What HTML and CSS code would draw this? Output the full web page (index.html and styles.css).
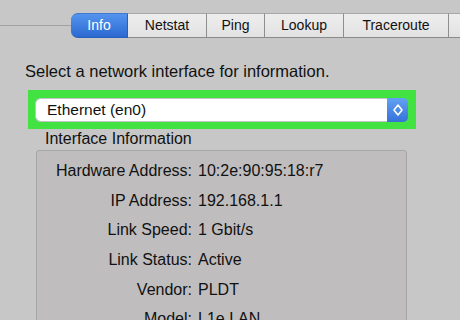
FILE: index.html
```html
<!DOCTYPE html>
<html lang="en">
<head>
    <meta charset="UTF-8">
    <meta name="viewport" content="width=device-width, initial-scale=1.0">
    <title>Network Utility</title>
    <link rel="stylesheet" href="styles.css">
</head>
<body>

<div class="tabs">
    <div class="tab-rule"></div>
    <div class="tab tab-active" style="width: 57px;">Info</div>
    <div class="tab" style="width: 79px;">Netstat</div>
    <div class="tab" style="width: 58px;">Ping</div>
    <div class="tab" style="width: 79px;">Lookup</div>
    <div class="tab" style="width: 105px;">Traceroute</div>
    <div class="tab" style="width: 20px;"></div>
</div>

<p class="prompt">Select a network interface for information.</p>

<div class="highlight">
    <div class="select-field">
        <div class="select-value">Ethernet (en0)</div>
        <div class="stepper">
            <svg width="12" height="14" viewBox="0 0 12 14">
                <path d="M6 2 L10 7 L6 12 L2 7 Z" fill="none" stroke="white" stroke-width="1.6" stroke-linejoin="round"/>
            </svg>
        </div>
    </div>
</div>

<div class="group-title">Interface Information</div>
<div class="group-box">
    <div class="info-grid">
        <div class="info-label">Hardware Address:</div><div>10:2e:90:95:18:r7</div>
        <div class="info-label">IP Address:</div><div>192.168.1.1</div>
        <div class="info-label">Link Speed:</div><div>1 Gbit/s</div>
        <div class="info-label">Link Status:</div><div>Active</div>
        <div class="info-label">Vendor:</div><div>PLDT</div>
        <div class="info-label">Model:</div><div>L1e LAN</div>
    </div>
</div>

</body>
</html>
```

FILE: styles.css
```css
body {
    font-family: 'Liberation Sans', Arial, sans-serif;
    background-color: #c7c7c7;
    margin: 0;
    padding: 0;
    color: #111;
    overflow: hidden;
}

.tabs {
    display: flex;
    align-items: stretch;
    margin-top: 13px;
    height: 25px;
    white-space: nowrap;
}

.tab-rule {
    flex: 0 0 71px;
    height: 1px;
    margin-top: 12px;
    background-color: #a2a2a2;
}

.tab {
    flex: 0 0 auto;
    box-sizing: border-box;
    height: 25px;
    line-height: 23px;
    text-align: center;
    font-size: 14px;
    color: #111;
    background: linear-gradient(#eeeeee, #e2e2e2);
    border-top: 1px solid #a8a8a8;
    border-bottom: 1px solid #8a8a8a;
    border-right: 1px solid #8e8e8e;
}

.tab-active {
    color: white;
    background: linear-gradient(#5494ee, #2b69d2);
    border-top-color: #3f78cf;
    border-bottom-color: #2a5fb8;
    border-right-color: #2a5fb8;
    border-radius: 7px 0 0 7px;
}

.prompt {
    margin: 24px 0 0 25px;
    font-size: 16.5px;
    line-height: 18px;
}

.highlight {
    margin: 10px 0 0 28px;
    width: 388px;
    box-sizing: border-box;
    padding: 8px 8px 7px 7px;
    background-color: #42e242;
}

.select-field {
    display: flex;
    height: 24px;
}

.select-value {
    flex: 1;
    box-sizing: border-box;
    background-color: white;
    border: 1px solid #c4c4c4;
    border-right: none;
    border-radius: 6px 0 0 6px;
    padding-left: 11px;
    font-size: 15.5px;
    line-height: 22px;
}

.stepper {
    flex: 0 0 21px;
    display: flex;
    align-items: center;
    justify-content: center;
    background: linear-gradient(#63a2f2, #3472da);
    border-radius: 0 5px 5px 0;
}

.group-title {
    margin: 1px 0 0 45px;
    font-size: 16px;
    line-height: 18px;
}

.group-box {
    margin: 2px 0 0 36px;
    width: 371px;
    min-height: 220px;
    box-sizing: border-box;
    padding-top: 5px;
    background-color: #bfbdbe;
    border: 1px solid #a6a6a6;
    border-radius: 3px;
}

.info-grid {
    display: grid;
    grid-template-columns: 155px 1fr;
    column-gap: 6px;
    grid-auto-rows: 29.7px;
    align-items: center;
    font-size: 16px;
}

.info-label {
    text-align: right;
}
```
